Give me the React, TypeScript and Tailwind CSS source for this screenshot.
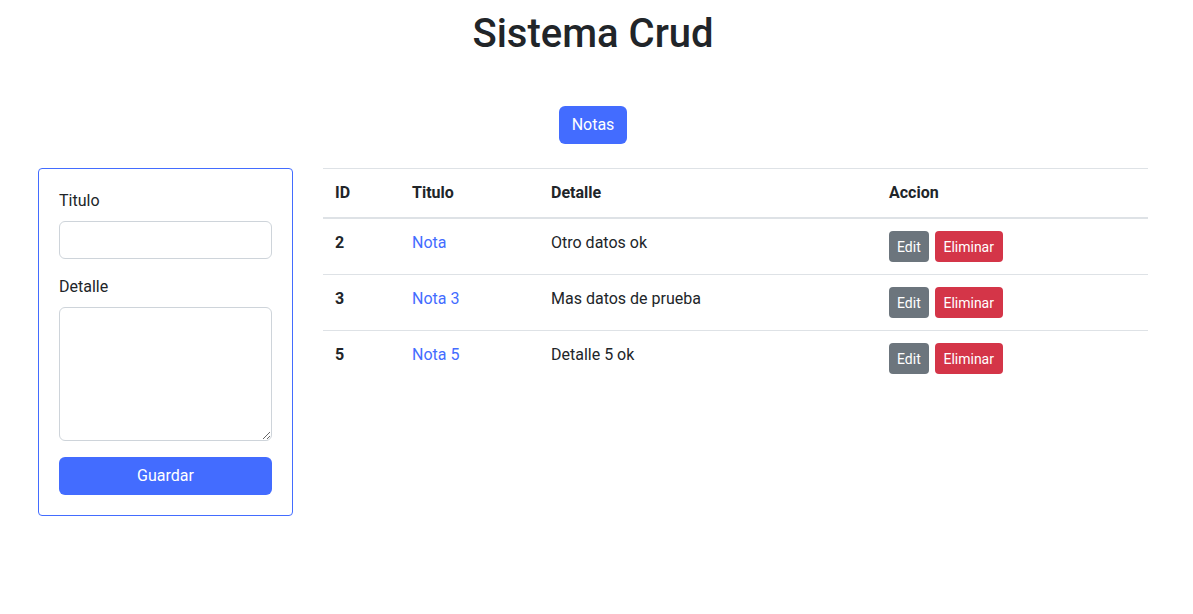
const notas = [
  { id: 2, titulo: 'Nota', detalle: 'Otro datos ok' },
  { id: 3, titulo: 'Nota 3', detalle: 'Mas datos de prueba' },
  { id: 5, titulo: 'Nota 5', detalle: 'Detalle 5 ok' },
];

export default function App() {
  return (
    <div className="min-h-screen bg-white pr-[7px] text-[#212529] text-base leading-6 font-['Roboto',sans-serif]">
      <h1 className="pt-[10px] text-center text-[40px] leading-[48px] font-medium">Sistema Crud</h1>

      <div className="mt-[48px] flex justify-center">
        <button className="h-[38px] w-[68px] rounded-md bg-[#436cff] text-white text-base">Notas</button>
      </div>

      {/* Main content */}
      <div className="mt-6 flex items-start gap-[30px] pl-[38px] pr-[38px]">
        {/* Form card */}
        <div className="w-[255px] shrink-0 border border-[#436cff] rounded p-5">
          <label className="block mb-2">Titulo</label>
          <input className="block w-full h-[38px] border border-[#ced4da] rounded-md px-3 outline-none" />
          <label className="block mt-4 mb-2">Detalle</label>
          <textarea className="block w-full h-[134px] border border-[#ced4da] rounded-md px-3 py-1.5 outline-none" />
          <button className="mt-4 w-full h-[38px] rounded-md bg-[#436cff] text-white text-base">Guardar</button>
        </div>

        {/* Table */}
        <table className="flex-1 border-collapse text-left">
          <thead>
            <tr className="border-t border-[#dee2e6]">
              <th className="w-[77px] px-3 py-3 font-bold">ID</th>
              <th className="w-[139px] px-3 py-3 font-bold">Titulo</th>
              <th className="w-[338px] px-3 py-3 font-bold">Detalle</th>
              <th className="px-3 py-3 font-bold">Accion</th>
            </tr>
          </thead>
          <tbody>
            {notas.map((n, i) => (
              <tr key={n.id} className={i === 0 ? 'border-t-2 border-[#dee2e6] align-top' : 'border-t border-[#dee2e6] align-top'}>
                <td className="px-3 py-3 font-bold">{n.id}</td>
                <td className="px-3 py-3 text-[#436cff]">{n.titulo}</td>
                <td className="px-3 py-3">{n.detalle}</td>
                <td className="px-3 py-3">
                  <div className="flex gap-1.5">
                    <button className="h-[31px] px-2 rounded bg-[#6c757d] text-white text-sm">Edit</button>
                    <button className="h-[31px] w-[68px] rounded bg-[#d43548] text-white text-sm">Eliminar</button>
                  </div>
                </td>
              </tr>
            ))}
          </tbody>
        </table>
      </div>
    </div>
  );
}
